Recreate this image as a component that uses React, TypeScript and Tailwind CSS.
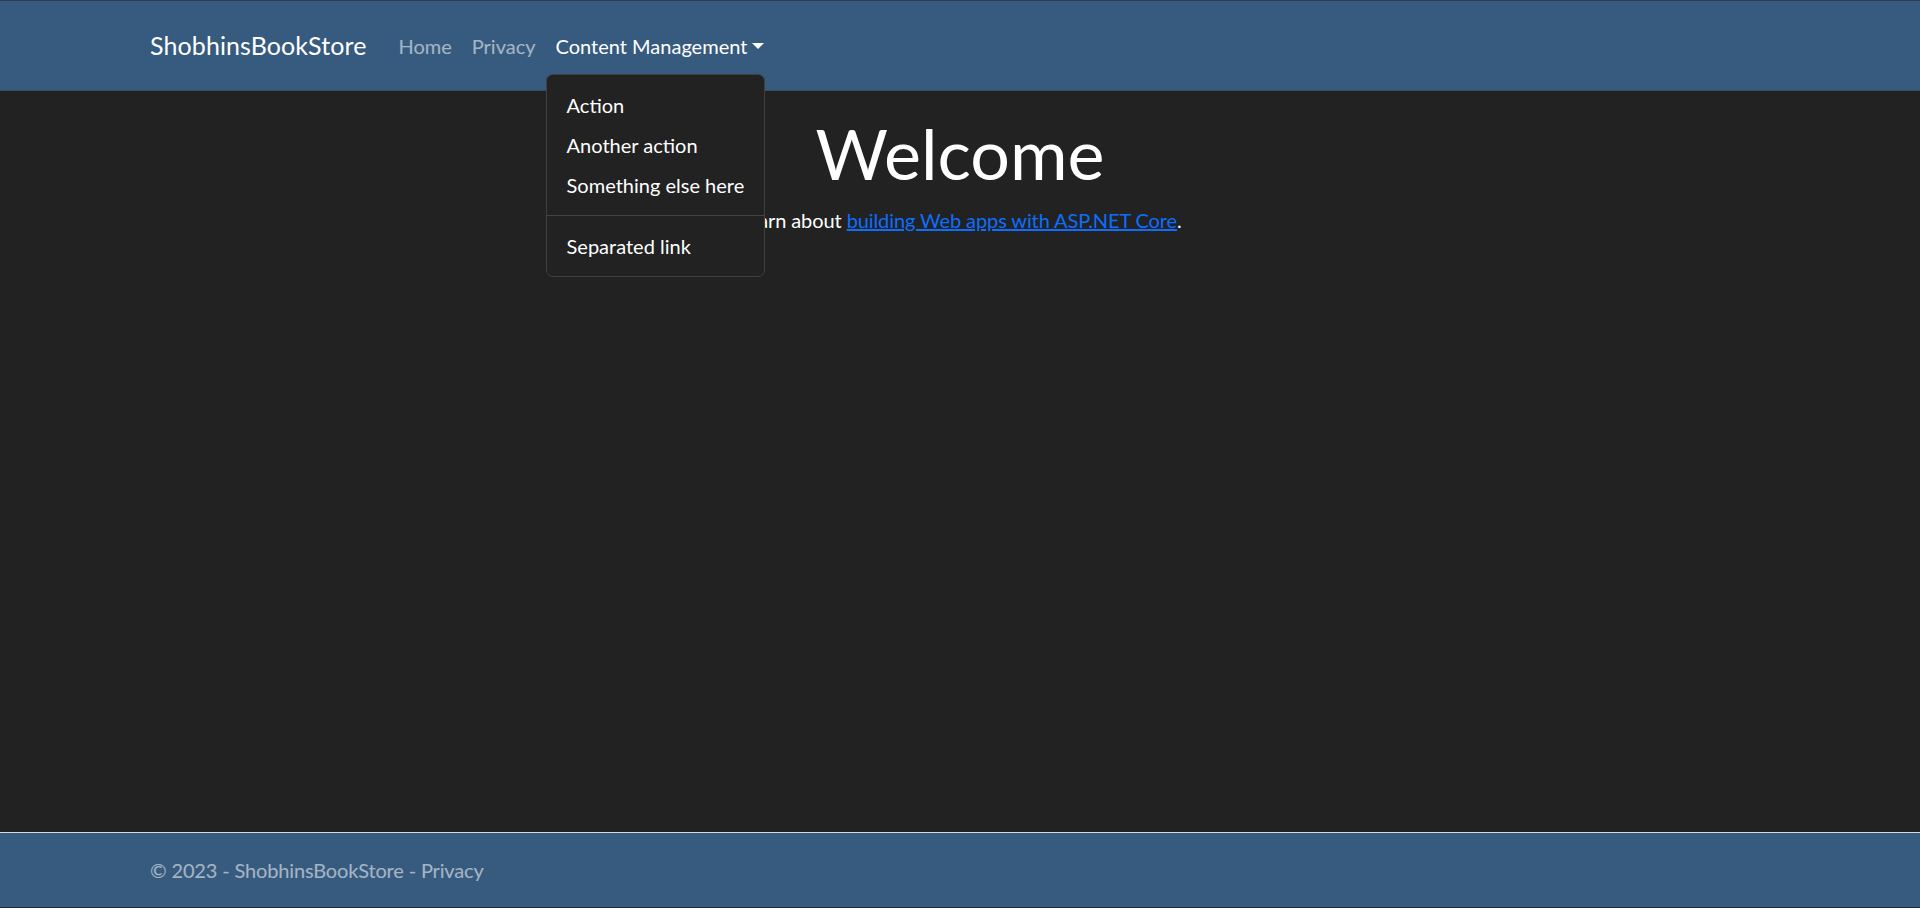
import React from "react";

const menuItems = ["Action", "Another action", "Something else here"];

function Navbar() {
    return (
        <header className="bg-[#375a7f] border-t border-t-[#2f3c4d] border-b border-b-[#3d4b5b]">
            <nav className="mx-auto w-[1650px] px-[15px] h-[89px] flex items-center">
                <a href="#" className="text-[25px] leading-[37.5px] text-white mr-[22px] py-[6px] tracking-[0.1px]">
                    ShobhinsBookStore
                </a>
                <ul className="flex items-center">
                    <li>
                        <a href="#" className="block px-[10px] py-[10px] text-[20px] leading-[30px] text-white/55">
                            Home
                        </a>
                    </li>
                    <li>
                        <a href="#" className="block px-[10px] py-[10px] text-[20px] leading-[30px] text-white/55">
                            Privacy
                        </a>
                    </li>
                    <li className="relative">
                        <a href="#" className="block px-[10px] py-[10px] text-[20px] leading-[30px] text-white">
                            Content Management
                            <span className="inline-block ml-[5px] align-[5px] w-0 h-0 border-t-[6px] border-t-white border-x-[6px] border-x-transparent"></span>
                        </a>
                        <div className="absolute left-0 top-full mt-[3px] z-10 min-w-[200px] py-[10px] bg-[#222] border border-[#3f3f3f] rounded-[7px] whitespace-nowrap">
                            {menuItems.map((item) => (
                                <a key={item} href="#" className="block px-[20px] py-[5px] text-[20px] leading-[30px] text-white">
                                    {item}
                                </a>
                            ))}
                            <div className="my-[10px] h-px bg-[#444]"></div>
                            <a href="#" className="block px-[20px] py-[5px] text-[20px] leading-[30px] text-white">
                                Separated link
                            </a>
                        </div>
                    </li>
                </ul>
            </nav>
        </header>
    );
}

export default function App() {
    return (
        <div className="min-h-[908px] flex flex-col bg-[#222] text-white font-['Lato','Liberation_Sans',sans-serif]">
            <Navbar />
            <main className="flex-1 pt-[20px]">
                <div className="mx-auto w-[1650px] px-[15px] text-center">
                    <h1 className="text-[70px] leading-[1.2] font-normal mb-[10px]">Welcome</h1>
                    <p className="text-[20px] leading-[30px] tracking-[-0.1px]">
                        Learn about{" "}
                        <a href="#" className="text-[#0d6efd] underline">
                            building Web apps with ASP.NET Core
                        </a>
                        .
                    </p>
                </div>
            </main>
            <footer className="h-[76px] bg-[#375a7f] border-t border-t-[#d3d9df] border-b border-b-[#1e2935]">
                <div className="mx-auto w-[1650px] px-[15px] text-[20px] leading-[74px] text-white/55 whitespace-nowrap tracking-[-0.15px]">
                    &copy; 2023 - ShobhinsBookStore - <a href="#">Privacy</a>
                </div>
            </footer>
        </div>
    );
}
